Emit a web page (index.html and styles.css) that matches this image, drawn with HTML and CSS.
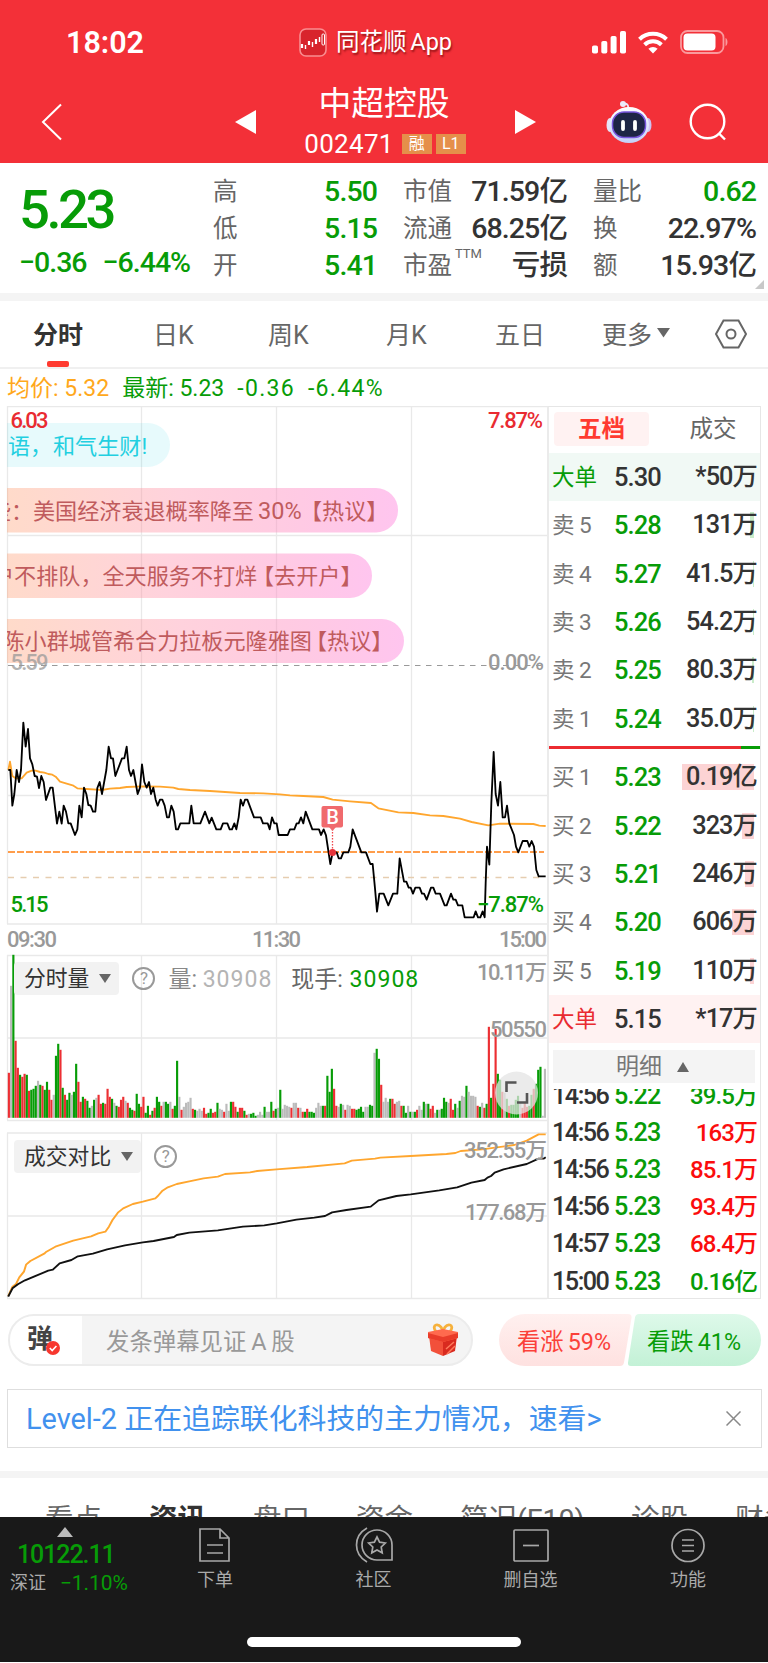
FILE: index.html
```html
<!DOCTYPE html>
<html lang="zh-CN">
<head>
    <meta charset="UTF-8">
    <meta name="viewport" content="width=device-width, initial-scale=1.0">
    <title>中超控股 002471</title>
    <link rel="stylesheet" href="styles.css">
</head>
<body>
    <header class="header">
        <div class="status">
            <span class="clock">18:02</span>
            <div class="app-name">
                <svg width="28" height="29" viewBox="0 0 28 29">
                    <rect x="1" y="1" width="26" height="27" rx="6" fill="#d8242c" stroke="#f98d90" stroke-width="1.6"/>
                    <path d="M3 16v4M10 13v4M17 11v5" stroke="#fff" stroke-width="2.2"/>
                    <path d="M6.500 17v4M13.500 14v5M20.500 9v5" stroke="#fff" stroke-width="1.4"/>
                    <rect x="23" y="6" width="2.500" height="11" rx="1" fill="none" stroke="#fff"/>
                </svg>
                <span>同花顺 App</span>
            </div>
            <div class="signals">
                <svg width="34" height="23" viewBox="0 0 34 23" fill="#fff">
                    <rect x="0" y="14.500" width="6" height="8" rx="1.800"/>
                    <rect x="9.300" y="10" width="6" height="12.500" rx="1.800"/>
                    <rect x="18.600" y="5" width="6" height="17.500" rx="1.800"/>
                    <rect x="28" y="0" width="6" height="22.500" rx="1.800"/>
                </svg>
                <svg width="30" height="23" viewBox="0 0 30 23" fill="none" stroke="#fff" stroke-width="4">
                    <path d="M1.500 8.200a19.500 19.500 0 0 1 27 0"/>
                    <path d="M6.600 13.700a12.200 12.200 0 0 1 16.800 0"/>
                    <path d="M15 22.500l-4.600-4.700a6.600 6.600 0 0 1 9.200 0z" fill="#fff" stroke="none"/>
                </svg>
                <svg width="49" height="24" viewBox="0 0 49 24">
                    <rect x="1" y="1" width="42.500" height="22" rx="6.500" fill="none" stroke="#fa9a9d" stroke-width="1.800"/>
                    <rect x="3.500" y="3.500" width="32" height="17" rx="4" fill="#fff"/>
                    <path d="M45.500 8v8c2.600-1 2.600-7 0-8z" fill="#fa9a9d"/>
                </svg>
            </div>
        </div>
        <div class="nav">
            <svg class="back" width="22" height="38" viewBox="0 0 22 38"><path d="M20 1.500L2 19l18 17.500" fill="none" stroke="#fff" stroke-width="2"/></svg>
            <svg class="prev" width="22" height="24" viewBox="0 0 22 24"><path d="M0 12L21 0v24z" fill="#fff"/></svg>
            <div class="stock">
                <h1>中超控股</h1>
                <div class="code"><span>002471</span><i>融</i><i>L1</i></div>
            </div>
            <svg class="next" width="22" height="24" viewBox="0 0 22 24"><path d="M22 12L1 0v24z" fill="#fff"/></svg>
            <svg class="robot" width="46" height="44" viewBox="0 0 46 44">
                <defs><linearGradient id="helmet" x1="0" y1="0" x2="0" y2="1"><stop offset="0" stop-color="#fff"/><stop offset="1" stop-color="#c3d0f8"/></linearGradient></defs>
                <path d="M22 9c1-4-1-6-5-5" fill="none" stroke="#e9e6f8" stroke-width="2"/>
                <circle cx="17" cy="4" r="3" fill="#eceafa"/>
                <ellipse cx="4" cy="25" rx="3.500" ry="7" fill="#e6e3f6"/>
                <ellipse cx="42" cy="25" rx="3.500" ry="7" fill="#cfc2f2"/>
                <ellipse cx="23" cy="25" rx="20" ry="18" fill="url(#helmet)"/>
                <rect x="6.500" y="12" width="33" height="25.500" rx="11.500" fill="#1d2545" stroke="#7756dc" stroke-width="1.500"/>
                <path d="M17 22v7M29 22v7" stroke="#fff" stroke-width="3.800" stroke-linecap="round"/>
            </svg>
            <svg class="search" width="38" height="38" viewBox="0 0 38 38" fill="none" stroke="#fff" stroke-width="2.400"><circle cx="18.500" cy="18.500" r="16.800"/><path d="M30 30.500l6 6"/></svg>
        </div>
    </header>

    <section class="summary">
        <div class="price">
            <strong>5.23</strong>
            <div><span>−0.36</span><span>−6.44%</span></div>
        </div>
        <dl class="stats c1">
            <dt>高</dt><dd class="down">5.50</dd>
            <dt>低</dt><dd class="down">5.15</dd>
            <dt>开</dt><dd class="down">5.41</dd>
        </dl>
        <dl class="stats c2">
            <dt>市值</dt><dd>71.59亿</dd>
            <dt>流通</dt><dd>68.25亿</dd>
            <dt>市盈<sup>TTM</sup></dt><dd>亏损</dd>
        </dl>
        <dl class="stats c3">
            <dt>量比</dt><dd class="down">0.62</dd>
            <dt>换</dt><dd>22.97%</dd>
            <dt>额</dt><dd>15.93亿</dd>
        </dl>
        <div class="corner"></div>
    </section>

    <nav class="periods">
        <span class="active">分时</span>
        <span>日K</span>
        <span>周K</span>
        <span>月K</span>
        <span>五日</span>
        <span class="more">更多<svg width="13" height="10" viewBox="0 0 13 10"><path d="M0 0h13L6.500 9.500z" fill="#666"/></svg></span>
        <svg class="gear" width="34" height="30" viewBox="0 0 34 30" fill="none" stroke="#666" stroke-width="2"><path d="M9.500 1.500h15L32 15l-7.500 13.500h-15L2 15z"/><circle cx="17" cy="15" r="4.500"/></svg>
    </nav>

    <div class="legend">
        <span class="avg">均价: 5.32</span><span>最新: 5.23</span><span class="diff">-0.36</span><span class="diff">-6.44%</span>
    </div>

    <main class="board">
        <div class="charts">
            <svg class="minute" width="547" height="548" viewBox="0 406 547 548">
                <defs>
                    <linearGradient id="pill"><stop offset="0" stop-color="#ff9e58" stop-opacity=".35"/><stop offset=".5" stop-color="#ff82a0" stop-opacity=".36"/><stop offset="1" stop-color="#ff96e2" stop-opacity=".55"/></linearGradient>
                    <clipPath id="plot"><rect x="7" y="406" width="540" height="518"/></clipPath>
                </defs>
                <g class="grid">
                    <path d="M7 406.500H547M7 535.500H547M7 795.500H547M7 924H547M7.500 406V924M141.500 406V924M276.500 406V924M411.500 406V924"/>
                </g>
                <path d="M8 665.500H548" stroke="#999" stroke-dasharray="5.500 5.500"/>
                <g clip-path="url(#plot)" class="danmaku">
                    <rect x="-60" y="423" width="230" height="44" rx="22" fill="#22cfe0" fill-opacity=".11"/>
                    <text x="8" y="453.500" fill="#22cfe0">语，<tspan x="53">和气生财!</tspan></text>
                    <rect x="-40" y="488" width="438" height="44.500" rx="22" fill="url(#pill)"/>
                    <text x="-11" y="518.500">些：<tspan x="33">美国经济衰退概率降至</tspan><tspan x="258" font-size="23.5">30%</tspan><tspan x="300">【热议】</tspan></text>
                    <rect x="-40" y="553.500" width="412" height="44.500" rx="22" fill="url(#pill)"/>
                    <text x="-8" y="584">户不排队，<tspan x="102.500">全天服务不打烊</tspan><tspan x="252">【去开户】</tspan></text>
                    <rect x="-40" y="619" width="444" height="44" rx="22" fill="url(#pill)"/>
                    <text x="2.500" y="649">陈小群城管希合力拉板元隆雅图<tspan x="305">【热议】</tspan></text>
                </g>
                <g class="axis">
                    <text x="10.500" y="427.500" class="up" textLength="38">6.03</text>
                    <text x="488" y="427.500" class="up" textLength="55">7.87%</text>
                    <text x="10.500" y="669.500" opacity=".75" textLength="38">5.59</text>
                    <text x="488" y="669.500" textLength="56">0.00%</text>
                    <text x="7" y="946.500" textLength="50">09:30</text>
                    <text x="252" y="946.500" textLength="49">11:30</text>
                    <text x="499" y="946.500" textLength="48">15:00</text>
                </g>
                <path d="M8 877.500H545" stroke="#e6cdb0" stroke-width="1.500" stroke-dasharray="6 6.500"/>
                <path d="M8 852H544" stroke="#ff9d4b" stroke-width="2" stroke-dasharray="7 2"/>
                <g transform="translate(0 670) scale(.33333)" fill="none" stroke-linejoin="round">
                    <polyline stroke="#ffa62e" stroke-width="5.500" points="25,300 30,275 37,318 47,325 65,325 80,308 95,302 107,302 120,306 133,308 145,312 157,314 167,320 180,335 200,341 218,346 232,355 260,357 290,359 305,360 330,356 360,354 380,351 430,349 480,350 520,353 535,357 570,360 630,363 720,369 790,370 840,373 870,376 910,378 970,381 998,389 1050,394 1113,399 1135,415 1195,427 1240,429 1290,436 1330,438 1380,446 1415,456 1465,466 1500,461 1600,462 1618,467 1637,468"/>
                    <polyline stroke="#000" stroke-width="5.500" points="25,300 31,300 37,407 43,372 50,300 57,336 63,300 70,158 77,230 84,177 90,265 97,283 104,318 111,320 117,354 124,318 131,336 138,390 151,353 158,353 171,461 178,425 185,461 191,407 198,425 205,460 212,460 225,495 232,478 238,407 245,442 252,353 259,372 265,405 272,407 279,425 286,425 292,354 299,336 306,372 319,300 326,230 333,265 339,265 346,318 366,265 373,265 380,230 387,300 393,318 400,300 413,372 420,353 426,283 433,336 440,353 447,336 453,372 460,353 467,389 473,407 480,389 487,389 494,407 501,442 507,442 514,407 521,425 528,478 534,478 541,460 568,460 574,407 581,460 601,460 615,425 628,460 635,443 649,478 662,478 669,460 682,460 689,478 696,478 703,460 709,478 716,442 722,389 729,407 735,389 742,389 762,442 782,442 789,460 803,460 809,478 816,442 823,460 830,460 836,495 863,495 870,478 883,478 890,460 896,460 903,442 910,460 917,425 937,478 957,478 963,495 971,478 978,496 991,582 998,547 1010,547 1016,565 1023,565 1030,547 1045,547 1051,530 1058,478 1084,547 1098,547 1111,582 1118,582 1125,655 1131,725 1138,671 1151,671 1165,706 1179,671 1192,671 1199,565 1212,635 1219,635 1226,653 1232,653 1239,671 1246,653 1259,653 1266,671 1272,671 1280,689 1293,653 1300,653 1307,671 1320,671 1334,706 1340,706 1353,671 1360,689 1367,689 1374,706 1387,706 1394,742 1421,742 1427,724 1434,742 1441,742 1448,724 1454,742 1457,640 1461,530 1468,584 1474,400 1481,246 1487,372 1494,407 1501,336 1508,442 1515,442 1521,407 1528,460 1542,495 1548,530 1555,547 1568,513 1582,513 1588,530 1595,513 1602,530 1609,600 1616,619 1637,619"/>
                </g>
                <!-- buy marker -->
                <path d="M332.500 829V850" stroke="#f0474c" stroke-width="1.300" stroke-dasharray="1.500 1.500"/>
                <path d="M329 827h7l-3.500 4z" fill="#f06a6d"/>
                <rect x="321.500" y="806" width="21.500" height="21.500" rx="2" fill="#f06a6d"/>
                <text x="332.500" y="824" text-anchor="middle" class="mark">B</text>
                <circle cx="332.500" cy="852.500" r="3.600" fill="#e6343a"/>
                <g class="axis">
                    <text x="10.500" y="911.500" class="down" textLength="38">5.15</text>
                    <text x="477" y="911.500" class="down" textLength="67">−7.87%</text>
                </g>
            </svg>

            <div class="panel volume">
                <svg width="547" height="178" viewBox="0 954 547 178">
                    <path class="grid" d="M7 955.500H547M7 1038H547M7 1120.500H547M7.500 955V1120M141.500 955V1120M276.500 955V1120M411.500 955V1120"/>
                    <g id="bars"></g>
                    <g class="axis">
                        <text x="477" y="980" textLength="70">10.11万</text>
                        <text x="490" y="1036.500" textLength="57">50550</text>
                    </g>
                    <circle cx="516.500" cy="1093" r="21.500" fill="#e4e4e4" fill-opacity=".75"/>
                    <path d="M506.500 1092v-9.500h10M517 1102.500h10V1093" fill="none" stroke="#555" stroke-width="2.600"/>
                </svg>
                <div class="tools">
                    <button class="pick">分时量<svg width="12" height="9" viewBox="0 0 12 9"><path d="M0 0h12L6 9z" fill="#666"/></svg></button>
                    <span class="help">?</span>
                    <span class="qty">量: <em>30908</em></span>
                    <span class="hand">现手: <em>30908</em></span>
                </div>
            </div>

            <div class="panel compare">
                <svg width="547" height="168" viewBox="0 1132 547 168">
                    <path class="grid" d="M7 1133H547M7 1216H547M7 1298.500H547M7.500 1133V1298M141.500 1133V1298M276.500 1133V1298M411.500 1133V1298"/>
                    <g transform="translate(0 1120) scale(.35714 .33333)" fill="none" stroke-width="5.500" stroke-linejoin="round">
                        <polyline stroke="#ffa62e" points="23,528 35,500 45,492 54,472 67,455 73,434 85,423 125,400 130,395 155,380 205,362 255,349 275,340 295,335 305,320 315,300 330,278 345,265 372,252 400,245 435,235 442,228 455,212 470,202 495,192 530,184 570,175 610,170 630,162 700,157 720,153 774,148 860,141 965,130 985,122 1050,116 1065,113 1150,108 1250,102 1275,99 1290,93 1350,88 1440,75 1475,62 1508,43 1528,43"/>
                        <polyline stroke="#111" points="23,530 35,505 50,493 70,481 95,470 135,452 148,449 167,430 200,420 218,409 260,401 300,388 350,376 400,367 430,363 487,351 495,345 530,338 610,331 680,320 740,316 775,310 830,299 880,293 910,288 930,277 970,270 1038,260 1060,241 1110,228 1150,223 1230,211 1280,202 1320,188 1357,180 1365,173 1375,168 1385,158 1410,148 1475,132 1508,116 1522,116 1528,112"/>
                    </g>
                    <g class="axis">
                        <text x="464" y="1157.500" textLength="83">352.55万</text>
                        <text x="465" y="1220" textLength="82">177.68万</text>
                    </g>
                </svg>
                <div class="tools">
                    <button class="pick">成交对比<svg width="12" height="9" viewBox="0 0 12 9"><path d="M0 0h12L6 9z" fill="#666"/></svg></button>
                    <span class="help">?</span>
                </div>
            </div>
        </div>

        <aside class="book">
            <div class="book-tabs"><span class="on">五档</span><span>成交</span></div>
            <div class="row big sell"><span>大单</span><b>5.30</b><u>*50万</u></div>
            <div class="row"><span>卖 5</span><b class="down">5.28</b><u><i class="g" style="width:4.5px"></i>131万</u></div>
            <div class="row"><span>卖 4</span><b class="down">5.27</b><u><i class="g" style="width:1px"></i>41.5万</u></div>
            <div class="row"><span>卖 3</span><b class="down">5.26</b><u><i class="g" style="width:1.5px"></i>54.2万</u></div>
            <div class="row"><span>卖 2</span><b class="down">5.25</b><u><i class="g" style="width:2.5px"></i>80.3万</u></div>
            <div class="row"><span>卖 1</span><b class="down">5.24</b><u><i class="g" style="width:1px"></i>35.0万</u></div>
            <div class="ratio"><i></i></div>
            <div class="row"><span>买 1</span><b class="down">5.23</b><u><i style="width:72px"></i>0.19亿</u></div>
            <div class="row"><span>买 2</span><b class="down">5.22</b><u><i style="width:12px"></i>323万</u></div>
            <div class="row"><span>买 3</span><b class="down">5.21</b><u><i style="width:9px"></i>246万</u></div>
            <div class="row"><span>买 4</span><b class="down">5.20</b><u><i style="width:22px"></i>606万</u></div>
            <div class="row"><span>买 5</span><b class="down">5.19</b><u><i style="width:4px"></i>110万</u></div>
            <div class="row big buy"><span>大单</span><b>5.15</b><u>*17万</u></div>
            <div class="detail">明细<svg width="12" height="10" viewBox="0 0 12 10"><path d="M0 10h12L6 0z" fill="#666"/></svg></div>
            <div class="ticks">
                <div class="tick"><span>14:56</span><b>5.22</b><u class="down">39.5万</u></div>
                <div class="tick"><span>14:56</span><b>5.23</b><u>163万</u></div>
                <div class="tick"><span>14:56</span><b>5.23</b><u>85.1万</u></div>
                <div class="tick"><span>14:56</span><b>5.23</b><u>93.4万</u></div>
                <div class="tick"><span>14:57</span><b>5.23</b><u>68.4万</u></div>
                <div class="tick"><span>15:00</span><b>5.23</b><u class="down">0.16亿</u></div>
            </div>
        </aside>
    </main>

    <section class="comment">
        <div class="input">
            <div class="toggle">弹<svg width="14" height="14" viewBox="0 0 14 14"><circle cx="7" cy="7" r="7" fill="#f7372e"/><path d="M3.800 7l2.400 2.500 4.200-4.500" fill="none" stroke="#fff" stroke-width="1.600"/></svg></div>
            <span>发条弹幕见证 A 股</span>
            <svg class="gift" width="32" height="34" viewBox="0 0 32 34">
                <path d="M16 10C8 12 5 3 9 2s7 4 7 8c0-4 3-9 7-8s1 10-7 8z" fill="none" stroke="#f6b13c" stroke-width="2.800"/>
                <path d="M2 13l14 4v16L4 28z" fill="#f2503a"/>
                <path d="M30 13l-14 4v16l12-5z" fill="#d92a1f"/>
                <path d="M1 9l15-3 15 3v6l-15 4-15-4z" fill="#ff6a4e"/>
                <path d="M1 10l15 4 15-4v5l-15 4-15-4z" fill="#e93c2a"/>
                <path d="M19 26l8-7M20 31l8-8" stroke="#ff7a5c" stroke-width="1.500"/>
            </svg>
        </div>
        <div class="vote">
            <svg width="262" height="52" viewBox="0 0 262 52">
                <defs>
                    <linearGradient id="bull" x1="0" y1="0" x2="0" y2="1"><stop offset="0" stop-color="#fff0ef"/><stop offset="1" stop-color="#fee1e0"/></linearGradient>
                    <linearGradient id="bear" x1="0" y1="0" x2="0" y2="1"><stop offset="0" stop-color="#def9ea"/><stop offset="1" stop-color="#c3f1d6"/></linearGradient>
                </defs>
                <path d="M26 0H129q4 0 3.500 4L125 48.500q-.7 3.500-4 3.500H26a26 26 0 0 1 0-52z" fill="url(#bull)"/>
                <path d="M236 0H140q-3.500 0-4 3.500L129 48.500q-.5 3.500 3 3.500H236a26 26 0 0 0 0-52z" fill="url(#bear)"/>
            </svg>
            <div class="vote-text"><span class="bull">看涨 59%</span><span class="bear">看跌 41%</span></div>
        </div>
    </section>

    <div class="notice">
        <span>Level-2 正在追踪联化科技的主力情况，速看&gt;</span>
        <svg width="15" height="15" viewBox="0 0 15 15"><path d="M.5.5l14 14M14.500.5l-14 14" stroke="#888" stroke-width="1.500"/></svg>
    </div>

    <nav class="sections">
        <span>看点</span><span class="active">资讯</span><span>盘口</span><span>资金</span><span>简况(F10)</span><span>诊股</span><span>财务</span>
    </nav>

    <footer class="dock">
        <div class="index">
            <svg width="16" height="10" viewBox="0 0 16 10"><path d="M0 10h16L8 0z" fill="#bbb"/></svg>
            <strong>10122.11</strong>
            <div><span>深证</span><em>−1.10%</em></div>
        </div>
        <div class="item">
            <svg width="36" height="36" viewBox="0 0 36 36"><path d="M3 2h20l9 9v23H3zM23 2v9h9M10 18h16M10 26h16"/></svg>
            <span>下单</span>
        </div>
        <div class="item">
            <svg width="38" height="36" viewBox="0 0 38 36"><path d="M12 1C-2 9-2 27 12 35M22 3a15 15 0 0 0 0 30h15V18A15 15 0 0 0 22 3zM22 10l2.600 5.200 5.700.8-4.100 4 1 5.800-5.200-2.800-5.200 2.800 1-5.800-4.100-4 5.700-.8z"/></svg>
            <span>社区</span>
        </div>
        <div class="item">
            <svg width="36" height="36" viewBox="0 0 36 36"><rect x="1" y="3" width="34" height="31" rx="1"/><path d="M10 18.500h16"/></svg>
            <span>删自选</span>
        </div>
        <div class="item">
            <svg width="36" height="36" viewBox="0 0 36 36"><circle cx="18" cy="18.500" r="16"/><path d="M12 13h12M12 18.500h12M12 24h12"/></svg>
            <span>功能</span>
        </div>
        <div class="home"></div>
    </footer>
    <script src="script.js"></script>
</body>
</html>
```
FILE: styles.css
```css
* {
    box-sizing: border-box;
}
body {
    margin: 0;
    width: 768px;
    height: 1663px;
    overflow: hidden;
    background: #fff;
    color: #333;
    font-family: Roboto, "Noto Sans CJK SC", sans-serif;
}
svg {
    display: block;
    flex: none;
}
h1, dl, dd {
    margin: 0;
}
i, em {
    font-style: normal;
}
u {
    text-decoration: none;
}
span, b, u, strong {
    white-space: nowrap;
}
.down {
    color: #079c07;
    fill: #079c07;
}
.up {
    fill: #e92b31;
}

/* header */
.header {
    height: 163px;
    background: #f33038;
    color: #fff;
}
.status {
    height: 84px;
    display: grid;
    grid-template-columns: 299px 293px 1fr;
    align-items: center;
}
.clock {
    padding-left: 66px;
    font-size: 30.5px;
    font-weight: 600;
}
.app-name {
    display: flex;
    align-items: center;
    gap: 9px;
    font-size: 23.5px;
    line-height: 30px;
    text-shadow: 1px 2px 2px rgba(90, 0, 0, 0.6);
    word-spacing: -2px;
}
.app-name span {
    margin-top: 0;
}
.signals {
    display: flex;
    align-items: center;
    gap: 12px;
}
.nav {
    height: 79px;
    display: grid;
    grid-template-columns: 194px 65px 214px 92px 83px 1fr;
    align-items: center;
    padding: 0 0 4px 41px;
}
.nav .stock {
    justify-self: start;
    width: 182px;
    margin-left: -7px;
    text-align: center;
}
.stock h1 {
    margin-top: -1px;
    font-size: 32.8px;
    line-height: 40px;
    font-weight: 400;
}
.code {
    display: flex;
    align-items: center;
    justify-content: center;
    gap: 4px;
    margin: 3px -2px -3px 0;
    font-size: 26px;
    line-height: 34px;
}
.code span {
    margin-right: 4px;
    letter-spacing: 0.3px;
}
.code i {
    width: 30px;
    height: 20px;
    background: #e58f4a;
    font-size: 16px;
    line-height: 20px;
}

/* quote summary */
.summary {
    position: relative;
    height: 138px;
    border-bottom: 8px solid #f4f4f4;
    display: flex;
}
.price {
    width: 213px;
    padding: 19px 0 0 19px;
    color: #079c07;
}
.price strong {
    display: block;
    font-size: 54.5px;
    line-height: 54px;
    font-weight: 500;
    letter-spacing: -3.5px;
}
.price div {
    display: flex;
    gap: 16px;
    margin-top: 10px;
    font-size: 28.5px;
    line-height: 34px;
    font-weight: 500;
    letter-spacing: -1px;
}
.stats {
    display: grid;
    grid-template-columns: auto 1fr;
    grid-template-rows: repeat(3, 36.8px);
    align-items: center;
    padding-top: 11px;
    line-height: 36px;
}
.stats dt {
    position: relative;
    font-size: 24.5px;
    color: #666;
}
.stats dd {
    text-align: right;
    font-size: 28.5px;
    font-weight: 500;
    letter-spacing: -0.9px;
}
.stats sup {
    position: absolute;
    left: 52px;
    top: -6px;
    font-size: 13px;
    line-height: 24px;
}
.c1 {
    width: 164px;
}
.c2 {
    width: 164px;
    margin-left: 26px;
}
.c3 {
    width: 163px;
    margin-left: 26px;
}
.corner {
    position: absolute;
    right: 4px;
    bottom: 4px;
    border-left: 9px solid transparent;
    border-bottom: 9px solid #c8c8c8;
}

/* period tabs */
.periods {
    height: 68px;
    padding: 0 20px 2px 33px;
    border-bottom: 2px solid #f0f0f0;
    display: grid;
    grid-template-columns: 120px 115px 118px 109px 107px 1fr auto;
    align-items: center;
    font-size: 25px;
    color: #666;
}
.periods .active {
    position: relative;
    color: #333;
    font-weight: 700;
}
.periods .active::after {
    content: "";
    position: absolute;
    left: 14px;
    bottom: -16px;
    width: 22px;
    height: 6px;
    border-radius: 2px;
    background: #ff3a30;
}
.gear {
    margin-top: 2px;
}
.more {
    display: flex;
    align-items: center;
    gap: 5px;
}
.legend {
    height: 37px;
    padding-left: 7px;
    display: flex;
    align-items: baseline;
    gap: 13px;
    font-size: 23px;
    line-height: 39px;
    color: #079c07;
}
.legend .avg {
    color: #ffa81c;
}
.legend .diff {
    letter-spacing: 1.3px;
}

/* charts */
.board {
    display: flex;
    height: 894px;
}
.charts {
    width: 547px;
}
.grid {
    fill: none;
    stroke: #e9e9e9;
    stroke-width: 1.3;
}
.danmaku text {
    font-size: 22.1px;
    fill: #c05b5d;
}
.danmaku text:first-of-type {
    fill: #22cfe0;
}
.axis text {
    font-size: 22px;
    font-weight: 500;
}
.axis text:not([class]) {
    fill: #999;
}
.mark {
    fill: #fff;
    font-size: 20px;
    font-weight: 500;
}
.panel {
    position: relative;
}
.tools {
    position: absolute;
    left: 14px;
    top: 8px;
    height: 33px;
    display: flex;
    align-items: center;
    font-size: 23px;
    line-height: 30px;
    color: #777;
}
.pick {
    height: 33px;
    padding: 0 8px 0 10px;
    border: 0;
    border-radius: 4px;
    background: #f2f2f2;
    color: #333;
    font: inherit;
    font-size: 21.8px;
    line-height: 30px;
    display: flex;
    align-items: center;
    gap: 10px;
}
.help {
    width: 23px;
    height: 23px;
    margin-left: 13px;
    border: 2px solid #999;
    border-radius: 50%;
    color: #999;
    font-size: 17px;
    line-height: 19px;
    text-align: center;
}
.qty, .hand {
    margin-top: 2px;
}
.qty {
    margin-left: 13px;
    color: #888;
}
.qty em {
    color: #b4b4b4;
    letter-spacing: 1px;
}
.hand {
    margin-left: 19px;
    color: #666;
}
.hand em {
    color: #079c07;
    letter-spacing: 1px;
    margin-left: 1px;
}

/* order book */
.book {
    width: 214px;
    height: 893px;
    border: 1px solid #e6e6e6;
    border-left: 2px solid #ebebeb;
}
.book-tabs {
    height: 46px;
    padding: 5px 0 7px 5px;
    display: flex;
    font-size: 23.5px;
    line-height: 35px;
    color: #666;
    text-align: center;
}
.book-tabs span {
    width: 95px;
}
.book-tabs .on {
    margin-right: 12px;
    border-radius: 4px;
    background: #fff2f2;
    color: #ff3a30;
    font-weight: 700;
}
.book-tabs span + span {
    padding-left: 9px;
}
.row {
    height: 48.3px;
    display: grid;
    grid-template-columns: 62px 60px 1fr;
    align-items: center;
    padding: 0 4px 0 3px;
    font-size: 25.5px;
    line-height: 30px;
}
.row span {
    font-size: 22.5px;
    color: #777;
    word-spacing: -1px;
}
.row b, .row u, .tick b, .tick u, .tick span {
    font-weight: 500;
    letter-spacing: -0.9px;
}
.row u, .tick u {
    position: relative;
    text-align: right;
    margin-right: -1px;
}
.row u {
    font-size: 25.3px;
    z-index: 0;
}
.row u i {
    position: absolute;
    z-index: -1;
    right: 3px;
    top: 2px;
    height: 26px;
    background: #fcd3d4;
}
.row u i.g {
    background: #c9ecc9;
}
.big.sell {
    background: #f1f9f5;
}
.big.buy {
    background: #fff2f2;
}
.big.sell span {
    color: #079c07;
}
.big.buy span {
    color: #e92b31;
}
.ratio {
    height: 3.5px;
    margin: 3px 0 4px;
    background: #079c07;
}
.ratio i {
    display: block;
    width: 192px;
    height: 100%;
    background: #ec2b31;
}
.detail {
    height: 33px;
    margin: 7px 5px 6px 4px;
    background: #f4f4f4;
    display: flex;
    align-items: center;
    justify-content: center;
    gap: 15px;
    font-size: 23px;
    line-height: 30px;
    color: #777;
    padding-right: 3px;
}
.ticks {
    height: 210.5px;
    display: flex;
    flex-direction: column;
    justify-content: flex-end;
    overflow: hidden;
}
.tick {
    flex: none;
    height: 37.1px;
    padding: 1px 4px 0 3px;
    display: grid;
    grid-template-columns: 62px 60px 1fr;
    align-items: center;
    font-size: 25.2px;
    line-height: 30px;
}
.tick span {
    letter-spacing: -1.5px;
}
.tick b {
    color: #079c07;
}
.tick u {
    color: #fb0d0d;
    font-size: 24px;
}
.tick u.down {
    color: #079c07;
}

/* comment bar */
.comment {
    height: 82px;
    padding: 14px 8px 0;
    display: flex;
    justify-content: space-between;
}
.input {
    width: 465px;
    height: 52px;
    border: 2px solid #ececec;
    border-radius: 26px;
    overflow: hidden;
    background: #f4f4f4;
    display: flex;
    align-items: center;
    font-size: 23.4px;
    color: #999;
}
.input span {
    flex: 1;
    padding-left: 24px;
    word-spacing: -1px;
}
.toggle {
    position: relative;
    width: 72px;
    height: 48px;
    padding-left: 17px;
    background: #fff;
    color: #444;
    font-size: 26px;
    line-height: 47px;
    font-weight: 700;
}
.toggle svg {
    position: absolute;
    left: 36px;
    top: 25px;
}
.gift {
    margin-right: 12px;
}
.vote {
    position: relative;
    height: 52px;
    margin-right: -1px;
}
.vote-text {
    position: absolute;
    inset: 0;
    display: flex;
    align-items: center;
    font-size: 23.3px;
    word-spacing: -1.6px;
}
.bull {
    width: 130px;
    padding-left: 18px;
    color: #fb4039;
}
.bear {
    padding-left: 18px;
    color: #079c07;
}

.notice {
    height: 59px;
    margin: 7px 6px 23px 7px;
    padding: 0 20px 0 18px;
    border: 1.5px solid #dedede;
    display: flex;
    align-items: center;
    justify-content: space-between;
    font-size: 28.9px;
    line-height: 40px;
    color: #4191ee;
}
.sections {
    height: 46px;
    border-top: 7px solid #f4f4f4;
    padding: 19px 0 0 45px;
    display: grid;
    grid-template-columns: 104px 104px 103px 104px 171px 104px 60px;
    overflow: hidden;
    font-size: 28.5px;
    line-height: 46px;
    color: #666;
}
.sections .active {
    color: #333;
    font-weight: 700;
}

/* dock */
.dock {
    position: relative;
    height: 145px;
    background: #191919;
    color: #aaa;
    display: grid;
    grid-template-columns: 135px 160px 157px 157px 158px;
}
.index {
    padding: 10px 0 0 10px;
}
.index > svg {
    margin-left: 47px;
}
.index strong {
    display: block;
    margin: 3px 0 0 7px;
    font-size: 25px;
    line-height: 29px;
    font-weight: 500;
    letter-spacing: -1.1px;
    color: #079c07;
}
.index div {
    display: flex;
    align-items: center;
    justify-content: space-between;
    width: 118px;
    font-size: 18px;
    line-height: 28px;
}
.index em {
    font-size: 21px;
    color: #079c07;
}
.item {
    padding-top: 10px;
    text-align: center;
    font-size: 18px;
    line-height: 32px;
}
.item svg {
    margin: 0 auto;
    fill: none;
    stroke: #a8a8a8;
    stroke-width: 1.7;
}
.item span {
    display: block;
    margin-top: 1px;
}
.home {
    position: absolute;
    left: 247px;
    top: 120px;
    width: 274px;
    height: 10px;
    border-radius: 5px;
    background: #fff;
}
```
FILE: script.js
```js
// minute volume: colour letter (r up, g down, y flat) + height
const volumes = `r45 y132 g163 r77 r50 g43 r41 r44 g43 r27 g28 g29 g32 y37 g33 r32 g28 g36 r28 r18
y23 g62 g74 r68 g30 r23 g18 g25 y23 g26 g54 r36 r16 g21 r19 g17 g10 y12 g18 y20
r23 r14 g15 r14 r29 r21 g19 y15 g12 r11 r18 r21 y17 r15 g10 g8 r7 g24 g14 r11
r21 g5 g12 r3 g7 r10 g21 g16 r12 y16 g16 g14 y16 r9 g12 g57 y21 r8 y11 y15
y16 y20 r9 g8 y7 y9 y7 r10 r4 g5 g9 r5 r6 g15 y9 y8 r6 y14 y7 g16
r16 r11 g6 r10 r10 g7 r3 y4 g4 g5 g2 y3 y6 y3 g11 y6 y6 g16 r7 g9
y10 g28 y9 y13 y12 y11 r10 y15 y15 r10 y10 r6 g6 r9 g6 g6 g5 y10 y15 y12
g12 r12 g42 g26 g49 r29 r12 y11 g14 y13 r8 y13 y12 r9 r9 g8 g9 g11 g6 y11
y11 g13 g12 y65 g69 g59 r33 y16 y20 y16 g19 r19 r14 y16 y17 r12 g12 g5 y12 g6
y6 g6 r8 y12 y8 g16 y14 g14 r9 r12 y5 g8 y8 g9 g20 g16 y15 r19 r8 g14
y10 g17 y22 y21 g32 y26 y22 y22 y21 r12 g11 y15 r10 g14 r91 g20 r34 r89 g44 g38
r26 y25 g19 r12 g13 g13 g18 g22 y15 r10 r16 r11 g12 g23 r29 g34 g48 g51 y2 y49`;
const colors = { r: '#ec2f33', g: '#079c07', y: '#bbb' };

const bars = document.getElementById('bars');
volumes.split(/\s+/).forEach((v, i) => {
    const h = Number(v.slice(1));
    const rect = document.createElementNS('http://www.w3.org/2000/svg', 'rect');
    rect.setAttribute('x', (7.8 + i * 2.243).toFixed(2));
    rect.setAttribute('y', 1117.8 - h);
    rect.setAttribute('width', 2.15);
    rect.setAttribute('height', h);
    rect.setAttribute('fill', colors[v[0]]);
    bars.appendChild(rect);
});
```
